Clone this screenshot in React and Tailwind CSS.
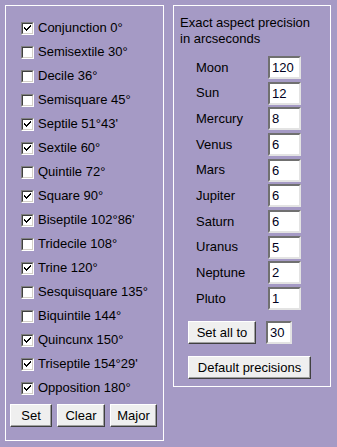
import React from 'react';

const aspects = [
  { label: 'Conjunction 0°', on: true },
  { label: 'Semisextile 30°', on: false },
  { label: 'Decile 36°', on: false },
  { label: 'Semisquare 45°', on: false },
  { label: "Septile 51°43'", on: true },
  { label: 'Sextile 60°', on: true },
  { label: 'Quintile 72°', on: false },
  { label: 'Square 90°', on: true },
  { label: "Biseptile 102°86'", on: true },
  { label: 'Tridecile 108°', on: false },
  { label: 'Trine 120°', on: true },
  { label: 'Sesquisquare 135°', on: false },
  { label: 'Biquintile 144°', on: false },
  { label: 'Quincunx 150°', on: true },
  { label: "Triseptile 154°29'", on: true },
  { label: 'Opposition 180°', on: true },
];

const planets = [
  ['Moon', '120'],
  ['Sun', '12'],
  ['Mercury', '8'],
  ['Venus', '6'],
  ['Mars', '6'],
  ['Jupiter', '6'],
  ['Saturn', '6'],
  ['Uranus', '5'],
  ['Neptune', '2'],
  ['Pluto', '1'],
];

function Checkbox({ on }) {
  return (
    <span className="w-[13px] h-[13px] shrink-0 border border-t-[#808080] border-l-[#808080] border-b-white border-r-white">
      <span className="block w-full h-full bg-white border border-t-[#404040] border-l-[#404040] border-b-[#d4d0c8] border-r-[#d4d0c8]">
        {on && (
          <svg width="9" height="9" viewBox="0 0 9 9" className="block">
            <path d="M1 3h1v1h1v1h1V4h1V3h1V2h1V1h1v2H7v1H6v1H5v1H4v1H3V6H2V5H1z" fill="#000" />
          </svg>
        )}
      </span>
    </span>
  );
}

function Button({ children, className }) {
  return (
    <button
      className={`h-[23px] bg-[#efefef] text-[13px] text-black border border-t-white border-l-white border-b-[#404040] border-r-[#404040] shadow-[inset_-1px_-1px_0_#a0a0a0] ${className}`}
    >
      {children}
    </button>
  );
}

function Field({ value, className }) {
  return (
    <div
      className={`h-[23px] bg-white border-2 border-t-[#707070] border-l-[#707070] border-b-[#e3e3e3] border-r-[#e3e3e3] pl-[2px] text-[13px] leading-[19px] text-[#000020] ${className}`}
    >
      {value}
    </div>
  );
}

export default function App() {
  return (
    <div
      className="w-[337px] h-[447px] bg-[#a59ac5] flex items-start pt-[5px] pl-[5px] gap-[9px] text-black"
      style={{ fontFamily: '"Liberation Sans", Arial, sans-serif' }}
    >
      <div className="w-[159px] h-[436px] border border-white flex flex-col">
        <div className="flex flex-col pt-[10px] pl-[15px]">
          {aspects.map((a) => (
            <div key={a.label} className="h-6 flex items-center gap-[4px]">
              <Checkbox on={a.on} />
              <span className="text-[13px] leading-4 whitespace-nowrap">{a.label}</span>
            </div>
          ))}
        </div>
        <div className="flex mt-[4px] pl-[4px] gap-[5px]">
          <Button className="w-[42px]">Set</Button>
          <Button className="w-[48px]">Clear</Button>
          <Button className="w-[47px]">Major</Button>
        </div>
      </div>

      <div className="w-[158px] h-[382px] border border-white flex flex-col pl-[6px] pt-[9px]">
        <div className="text-[13px] leading-4">
          Exact aspect precision
          <br />
          in arcseconds
        </div>
        <div className="flex flex-col gap-[2.67px] mt-[9px]">
          {planets.map(([name, v]) => (
            <div key={name} className="h-[23px] flex items-center">
              <span className="w-[88px] pl-[16px] text-[13px]">{name}</span>
              <Field value={v} className="w-[33px]" />
            </div>
          ))}
        </div>
        <div className="flex items-center mt-[11px] pl-[8px] gap-[10px]">
          <Button className="w-[68px] h-[22px]">Set all to</Button>
          <Field value="30" className="w-[26px] h-[22px]" />
        </div>
        <div className="mt-[11px] pl-[8px]">
          <Button className="w-[123px]">Default precisions</Button>
        </div>
      </div>
    </div>
  );
}
